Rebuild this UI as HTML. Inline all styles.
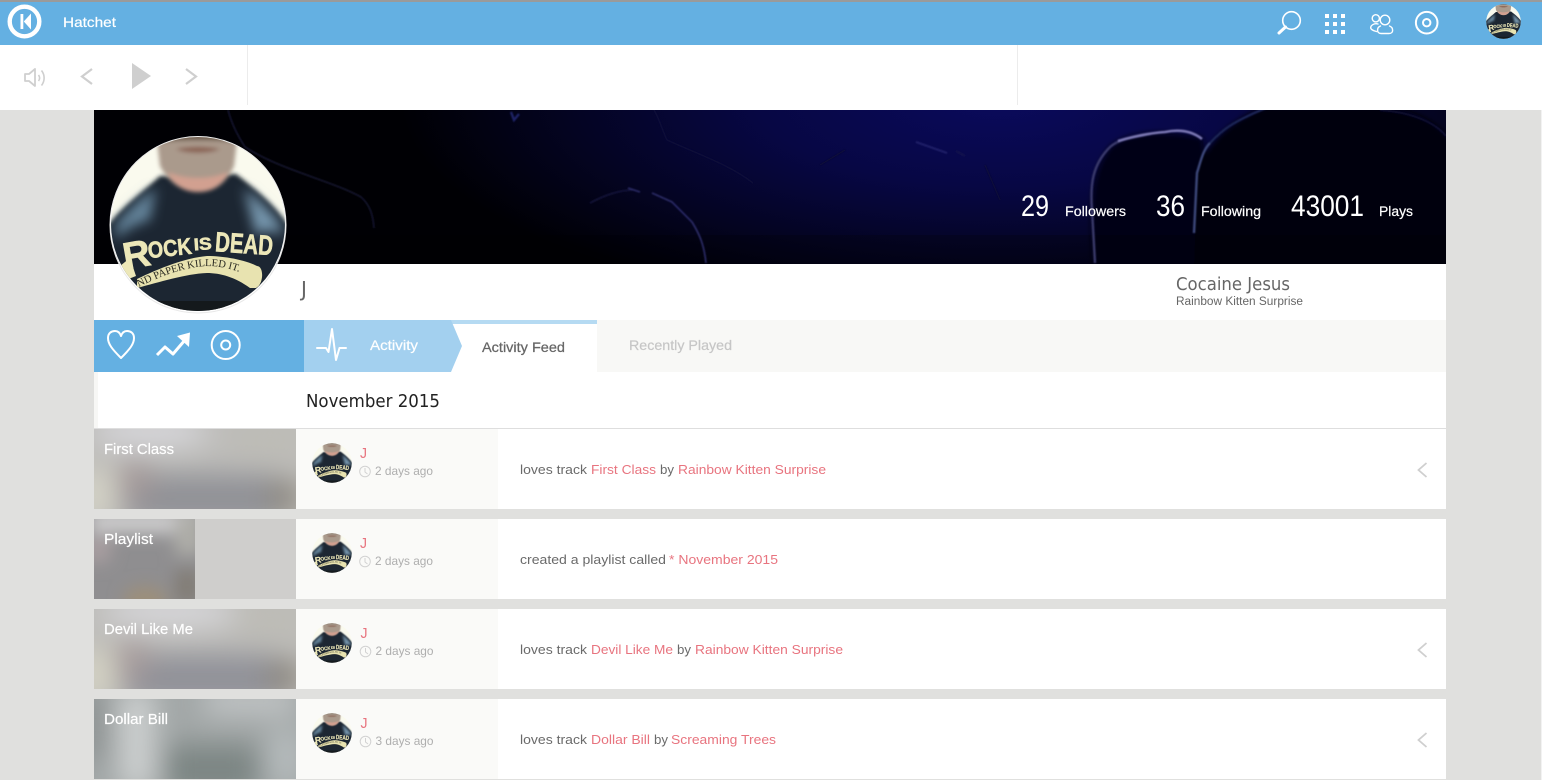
<!DOCTYPE html>
<html><head><meta charset="utf-8"><title>Hatchet</title>
<style>
html,body{margin:0;padding:0;width:1542px;height:780px;overflow:hidden;background:#e0e0de}
svg{display:block;position:absolute;left:0;top:0}
text{font-family:"Liberation Sans",sans-serif}
.w{fill:#fff}.g{fill:#6a6a6a;font-size:13px}.r{fill:#e8747f;font-size:13px}.t{fill:#fff;font-size:14.5px}
.j{fill:#e8747f;font-size:15px}.d{fill:#aeaeae;font-size:12px}
.o{font-family:"DejaVu Sans",sans-serif}
.cl{fill:none;stroke:#d2d2d2;stroke-width:1}
.ic{fill:none;stroke:#fff;stroke-width:2;stroke-linecap:round;stroke-linejoin:round}
.gr{fill:none;stroke:#cfcfcf;stroke-width:2.2}
</style></head>
<body>
<svg width="1542" height="780" viewBox="0 0 1542 780" xmlns="http://www.w3.org/2000/svg">
<defs>
<filter id="b2" x="-30%" y="-30%" width="160%" height="160%"><feGaussianBlur stdDeviation="2"/></filter>
<filter id="b3" x="-30%" y="-30%" width="160%" height="160%"><feGaussianBlur stdDeviation="3"/></filter>
<filter id="b6" x="-30%" y="-30%" width="160%" height="160%"><feGaussianBlur stdDeviation="6"/></filter>
<filter id="b1" x="-30%" y="-30%" width="160%" height="160%"><feGaussianBlur stdDeviation="0.7"/></filter>
<filter id="bs" x="-30%" y="-30%" width="160%" height="160%"><feGaussianBlur stdDeviation="0.35"/></filter>
<filter id="b9" x="-50%" y="-50%" width="200%" height="200%"><feGaussianBlur stdDeviation="8"/></filter>
<filter id="b14" x="-50%" y="-50%" width="200%" height="200%"><feGaussianBlur stdDeviation="14"/></filter>
<radialGradient id="navy" gradientUnits="userSpaceOnUse" cx="0" cy="0" r="600" gradientTransform="translate(1000 100) scale(1 .36)">
<stop offset="0" stop-color="#0a0a5c"/><stop offset=".4" stop-color="#070744"/><stop offset=".72" stop-color="#040422"/><stop offset="1" stop-color="#000004"/>
</radialGradient>
<clipPath id="ban"><rect x="94" y="110" width="1352" height="154"/></clipPath>
<clipPath id="c"><circle cx="88" cy="88" r="87"/></clipPath>
<clipPath id="th1"><rect x="94" y="429" width="202" height="80"/></clipPath>
<clipPath id="th2"><rect x="94" y="519" width="101" height="80"/></clipPath>
<clipPath id="th3"><rect x="94" y="609" width="202" height="80"/></clipPath>
<clipPath id="th4"><rect x="94" y="699" width="202" height="80"/></clipPath>
<path id="sc" d="M29 151 C50 140 75 131 97 130 C112 130 128 134 145 143"/>
<symbol id="av" viewBox="0 0 176 176">
<g clip-path="url(#c)">
<rect width="176" height="176" fill="#fafaee"/>
<g filter="url(#b2)">
<path d="M-4 92 C10 72 30 58 50 40 L126 38 C150 56 168 72 180 92 V180 H-4Z" fill="#1d2832"/>
</g>
<g filter="url(#b6)">
<path d="M6 88 C18 74 30 62 46 52 L40 84 C28 88 16 92 6 104Z" fill="#64839a"/>
<path d="M170 88 C158 72 146 62 134 52 L146 100 C152 94 160 92 172 100Z" fill="#7696ad"/>
</g>
<g filter="url(#b2)">
<path d="M46 -4 H128 L124 30 C116 48 104 56 88 56 C72 56 58 46 50 30Z" fill="#aa9a8c"/>
<path d="M46 -4 H128 L126 6 C110 4 66 4 50 6Z" fill="#6f5e50"/>
<path d="M66 13 C78 10 98 10 110 13 C100 18 76 18 66 13Z" fill="#8a6454"/>
<path d="M58 36 C74 44 102 44 118 36 C114 48 102 56 88 56 C74 56 62 48 58 36Z" fill="#d2a090"/>
</g>
<g filter="url(#bs)">
<g fill="#ece7b8" stroke="#ece7b8" stroke-width=".6" font-weight="bold" style="font-family:'Liberation Serif',serif">
<text x="14" y="131" font-size="38" transform="rotate(-10 30 125)">R</text>
<text x="38" y="120" font-size="23" textLength="44" lengthAdjust="spacingAndGlyphs" transform="rotate(-6 60 115)">OCK</text>
<text x="84" y="114" font-size="17" textLength="18" lengthAdjust="spacingAndGlyphs" transform="rotate(-4 90 112)">IS</text>
<text x="105" y="117" font-size="28" textLength="58" lengthAdjust="spacingAndGlyphs" transform="rotate(4 130 110)">DEAD</text>
</g>
<path d="M10 130 L20 122 L26 140 L16 144Z" fill="#ece7b8"/>
<path d="M27 143 C50 132 75 122 97 120 C115 120 135 124 147 130 C154 130 154 148 146 152 L140 152 C125 141 110 137 97 137 C75 138 50 146 27 152Z" fill="#e8e3b0"/>
<text font-size="10.500" fill="#2a2a20" style="font-family:'Liberation Serif',serif"><textPath href="#sc">ND PAPER KILLED IT.</textPath></text>
</g>
<rect x="0" y="165" width="176" height="12" fill="#14191c"/>
</g>
</symbol>
</defs>

<!-- chrome -->
<rect width="1542" height="780" fill="#e0e0de"/>
<rect x="1541" y="110" width="1" height="670" fill="#f2f2f2"/>
<rect y="0" width="1542" height="2" fill="#9a9a9a"/>
<rect y="2" width="1542" height="43" fill="#64b0e2"/>
<rect y="45" width="1542" height="65" fill="#fff"/>
<rect x="247" y="45" width="1" height="60" fill="#ececec"/>
<rect x="1017" y="45" width="1" height="60" fill="#ececec"/>

<!-- logo -->
<circle cx="24.5" cy="21.5" r="14.8" fill="none" stroke="#fff" stroke-width="4.4"/>
<rect x="20.5" y="14" width="2.8" height="15" fill="#fff"/>
<path d="M31 13.5 V29.5 L23.8 21.5Z" fill="#fff"/>
<text x="63" y="27" font-size="14" class="w" stroke="#fff" stroke-width=".2" textLength="53" lengthAdjust="spacingAndGlyphs">Hatchet</text>

<!-- header icons -->
<circle cx="1291.5" cy="20.5" r="8.8" class="ic" style="stroke-width:1.6"/>
<path d="M1279 33 L1285.5 27" class="ic" style="stroke-width:3"/>
<g fill="#fff">
<rect x="1325" y="14" width="4" height="4"/><rect x="1333" y="14" width="4" height="4"/><rect x="1341" y="14" width="4" height="4"/>
<rect x="1325" y="22" width="4" height="4"/><rect x="1333" y="22" width="4" height="4"/><rect x="1341" y="22" width="4" height="4"/>
<rect x="1325" y="30" width="4" height="4"/><rect x="1333" y="30" width="4" height="4"/><rect x="1341" y="30" width="4" height="4"/>
</g>
<g class="ic" style="stroke-width:1.4">
<circle cx="1375.8" cy="18.3" r="3.6"/><circle cx="1385" cy="20" r="4.8"/>
<path d="M1378 24 C1374.5 23 1371 25 1370.7 27.5 C1370.5 29.5 1373 30.5 1376.5 31.5"/>
<path d="M1380.5 26 C1376.5 27.5 1376.5 33.5 1381 33.5 H1389 C1394 33.5 1393.5 27.5 1389.5 26"/>
</g>
<circle cx="1426.7" cy="22.7" r="10.8" class="ic"/><circle cx="1426.7" cy="22.7" r="3.7" class="ic"/>
<use href="#av" x="1486" y="4" width="35" height="35"/>

<!-- player -->
<path d="M25 74 H29 L35 69 V86 L29 81 H25Z" class="gr" style="stroke-width:1.8;stroke-linejoin:round"/>
<path d="M38.5 75 C40 77 40 79 38.5 81 M41.5 70.5 C45 75 45 81 41.5 85.5" class="gr" style="stroke-width:1.6"/>
<path d="M92 69 L82 76.5 L92 84" class="gr"/>
<path d="M132 63 L151 76 L132 89Z" fill="#cfcfcf"/>
<path d="M186 69 L196 76.5 L186 84" class="gr"/>

<!-- banner -->
<g clip-path="url(#ban)">
<rect x="94" y="110" width="1352" height="154" fill="url(#navy)"/>
<g filter="url(#b3)">
<path d="M1094 270 C1088 200 1092 170 1110 147 C1125 133 1160 128 1203 138 L1220 270Z" fill="#030318"/>
<path d="M1194 270 L1197 173 C1204 143 1235 118 1266 106 H1380 C1410 108 1436 120 1450 140 V270Z" fill="#01020c"/>
</g>
<rect x="94" y="235" width="1352" height="30" fill="#000" opacity=".2"/>
<g fill="none" filter="url(#b1)">
<path d="M1095 263 L1092 210 C1090 185 1092 165 1110 147 C1120 138 1135 137 1150 134" stroke="#3a3a6c" stroke-width="2.4"/>
<path d="M1118 141 C1135 136 1150 133 1165 132 C1180 129 1192 131 1202 139" stroke="#7c78b4" stroke-width="2.6"/>
<path d="M1194 233 L1197 173 C1201 160 1203 150 1210 143" stroke="#3e4a7c" stroke-width="2.4"/>
<path d="M1210 143 C1222 130 1232 122 1266 108" stroke="#1e2858" stroke-width="2.2"/>
<path d="M1380 110 C1410 112 1435 122 1446 136" stroke="#0c0c30" stroke-width="2"/>
<path d="M228 110 C232 125 238 136 245 147 C280 170 330 180 361 197 C370 205 373 215 374 228" stroke="#161830" stroke-width="1.5"/>
<path d="M654 110 C660 120 662 130 667 140 C700 155 730 165 753 183" stroke="#10103a" stroke-width="1.4"/>
<path d="M590 203 C605 195 620 190 633 190" stroke="#14143c" stroke-width="1.5"/>
<path d="M628 188 L640 192 M652 193 L672 202 L692 222 C700 235 704 245 706 263" stroke="#2c2c66" stroke-width="1.7"/>
<path d="M511 112 L514 120 L519 114" stroke="#1e2266" stroke-width="2.4"/>
<path d="M916 142 L947 153" stroke="#20206a" stroke-width="1.8"/>
<path d="M956 151 L965 156" stroke="#14144c" stroke-width="1.5"/>
<path d="M820 165 L845 150 M985 165 L1000 200" stroke="#0c0c30" stroke-width="1.2"/>
</g>
</g>
<text x="1021" y="216" font-size="30" class="w" textLength="28" lengthAdjust="spacingAndGlyphs">29</text>
<text x="1156" y="216" font-size="30" class="w" textLength="29" lengthAdjust="spacingAndGlyphs">36</text>
<text x="1291" y="216" font-size="30" class="w" textLength="73" lengthAdjust="spacingAndGlyphs">43001</text>
<text x="1065" y="216" font-size="13.5" class="w" stroke="#fff" stroke-width=".2" textLength="61" lengthAdjust="spacingAndGlyphs">Followers</text>
<text x="1201" y="216" font-size="13.5" class="w" stroke="#fff" stroke-width=".2" textLength="60" lengthAdjust="spacingAndGlyphs">Following</text>
<text x="1379" y="216" font-size="13.5" class="w" stroke="#fff" stroke-width=".2" textLength="34" lengthAdjust="spacingAndGlyphs">Plays</text>

<!-- info strip -->
<rect x="94" y="264" width="1352" height="56" fill="#fff"/>
<text x="301" y="296" font-size="20" fill="#666" class="o">J</text>
<text x="1176" y="290" font-size="17.5" fill="#666" class="o" textLength="114" lengthAdjust="spacingAndGlyphs">Cocaine Jesus</text>
<text x="1176" y="305" font-size="11.5" fill="#666" textLength="127" lengthAdjust="spacingAndGlyphs">Rainbow Kitten Surprise</text>

<!-- avatar -->
<circle cx="198" cy="224" r="88" fill="#fff"/>
<circle cx="198" cy="225" r="88" fill="none" stroke="#e8e8e8" stroke-width="1"/>
<use href="#av" x="110" y="136" width="176" height="176"/>

<!-- tabs -->
<rect x="94" y="320" width="1352" height="52" fill="#f8f8f6"/>
<rect x="94" y="320" width="210" height="52" fill="#64b0e2"/>
<rect x="451" y="320" width="146" height="52" fill="#fff"/>
<rect x="451" y="320" width="146" height="4" fill="#b5daf2"/>
<path d="M304 320 H451 L462 346 L451 372 H304Z" fill="#a3d0ef"/>
<path class="ic" d="M121 358 C112 349 108 344 108 338 C108 333 111.5 331 115 331 C118 331 120 333 121 336 C122 333 124 331 127 331 C130.5 331 134 333 134 338 C134 344 130 349 121 358Z"/>
<path class="ic" d="M157 355 L165 347 L173 354 L185 340" style="stroke-width:3;stroke-linecap:butt"/>
<path d="M190 332.5 L177 336 L189 347Z" fill="#fff"/>
<circle cx="225.7" cy="345" r="14" class="ic"/><circle cx="225.7" cy="345" r="4.5" class="ic"/>
<path class="ic" d="M317 348 H326 L328.5 352 L332 329 L336 360 L339.5 348 H346"/>
<text x="370" y="350" font-size="14" class="w" stroke="#fff" stroke-width=".2" textLength="48" lengthAdjust="spacingAndGlyphs">Activity</text>
<text x="482" y="352" font-size="14" fill="#666" stroke="#666" stroke-width=".25" textLength="83" lengthAdjust="spacingAndGlyphs">Activity Feed</text>
<text x="629" y="350" font-size="14" fill="#c6c6c6" stroke="#c6c6c6" stroke-width=".2" textLength="103" lengthAdjust="spacingAndGlyphs">Recently Played</text>

<!-- heading -->
<rect x="94" y="372" width="1352" height="56" fill="#fff"/>
<rect x="94" y="372" width="4" height="56" fill="#f7f7f5"/>
<rect x="94" y="428" width="1352" height="1" fill="#dedede"/>
<text x="306" y="407" font-size="17.5" fill="#222" class="o" textLength="134" lengthAdjust="spacingAndGlyphs">November 2015</text>

<!-- rows backgrounds -->
<g fill="#fff"><rect x="94" y="429" width="1352" height="80"/><rect x="94" y="519" width="1352" height="80"/><rect x="94" y="609" width="1352" height="80"/><rect x="94" y="699" width="1352" height="80"/></g>
<g fill="#fafaf8"><rect x="296" y="429" width="202" height="80"/><rect x="296" y="519" width="202" height="80"/><rect x="296" y="609" width="202" height="80"/><rect x="296" y="699" width="202" height="80"/></g>

<!-- thumb 1 -->
<g clip-path="url(#th1)">
<rect x="94" y="429" width="202" height="80" fill="#bdbcb9"/>
<g filter="url(#b14)">
<ellipse cx="150" cy="432" rx="60" ry="14" fill="#dadadf"/>
<ellipse cx="270" cy="440" rx="40" ry="18" fill="#bdbcb6"/>
<rect x="125" y="474" width="150" height="50" fill="#909196"/>
<ellipse cx="135" cy="480" rx="16" ry="22" fill="#a39797"/>
<rect x="84" y="470" width="24" height="50" fill="#dcdacb"/>
<rect x="270" y="480" width="30" height="35" fill="#8c877e"/>
</g>
</g>
<!-- thumb 2 -->
<rect x="195" y="519" width="101" height="80" fill="#cfcecc"/>
<g clip-path="url(#th2)">
<rect x="94" y="519" width="101" height="80" fill="#8f8e90"/>
<g filter="url(#b9)">
<rect x="90" y="510" width="110" height="24" fill="#cbcacb"/>
<rect x="175" y="515" width="28" height="40" fill="#aeada8"/>
<ellipse cx="98" cy="550" rx="14" ry="14" fill="#a89ea0"/>
<ellipse cx="145" cy="600" rx="22" ry="14" fill="#9c8f7a"/>
<rect x="175" y="570" width="24" height="34" fill="#827d76"/>
</g>
</g>
<!-- thumb 3 -->
<g clip-path="url(#th3)">
<rect x="94" y="609" width="202" height="80" fill="#bdbcb9"/>
<g filter="url(#b14)">
<ellipse cx="170" cy="612" rx="70" ry="14" fill="#dadade"/>
<ellipse cx="270" cy="620" rx="40" ry="18" fill="#bdbcb6"/>
<rect x="125" y="654" width="150" height="50" fill="#909198"/>
<ellipse cx="132" cy="660" rx="16" ry="22" fill="#a69a9a"/>
<rect x="84" y="650" width="24" height="50" fill="#dcdac8"/>
<rect x="270" y="660" width="30" height="35" fill="#8a857c"/>
</g>
</g>
<!-- thumb 4 -->
<g clip-path="url(#th4)">
<rect x="94" y="699" width="202" height="80" fill="#a2a7a7"/>
<g filter="url(#b14)">
<rect x="120" y="690" width="34" height="100" fill="#cfd2d2"/>
<rect x="80" y="690" width="26" height="70" fill="#8a8f8f"/>
<rect x="205" y="690" width="90" height="22" fill="#c8cbcc"/>
<rect x="165" y="745" width="95" height="50" fill="#7b8583"/>
<rect x="270" y="730" width="30" height="55" fill="#b8bebf"/>
</g>
</g>
<rect x="94" y="779" width="1352" height="1" fill="#e0e0de"/>

<text x="104" y="454" class="t" stroke="#fff" stroke-width=".2" textLength="70" lengthAdjust="spacingAndGlyphs">First Class</text>
<text x="104" y="544" class="t" stroke="#fff" stroke-width=".2" textLength="49" lengthAdjust="spacingAndGlyphs">Playlist</text>
<text x="104" y="634" class="t" stroke="#fff" stroke-width=".2" textLength="89" lengthAdjust="spacingAndGlyphs">Devil Like Me</text>
<text x="104" y="724" class="t" stroke="#fff" stroke-width=".2" textLength="64" lengthAdjust="spacingAndGlyphs">Dollar Bill</text>

<!-- row meta -->
<use href="#av" x="312" y="443" width="40" height="40"/>
<use href="#av" x="312" y="533" width="40" height="40"/>
<use href="#av" x="312" y="623" width="40" height="40"/>
<use href="#av" x="312" y="713" width="40" height="40"/>
<text x="360" y="458" class="j" textLength="7" lengthAdjust="spacingAndGlyphs">J</text>
<text x="360" y="548" class="j" textLength="7" lengthAdjust="spacingAndGlyphs">J</text>
<text x="360.5" y="638" class="j" textLength="7" lengthAdjust="spacingAndGlyphs">J</text>
<text x="360.5" y="728" class="j" textLength="7" lengthAdjust="spacingAndGlyphs">J</text>
<g class="cl">
<circle cx="365" cy="471.5" r="5.3"/><path d="M365 468 V472 L367.5 474"/>
<circle cx="365" cy="561.5" r="5.3"/><path d="M365 558 V562 L367.5 564"/>
<circle cx="365.5" cy="651.5" r="5.3"/><path d="M365.5 648 V652 L368 654"/>
<circle cx="365.5" cy="741.5" r="5.3"/><path d="M365.5 738 V742 L368 744"/>
</g>
<text x="375" y="475" class="d" textLength="58" lengthAdjust="spacingAndGlyphs">2 days ago</text>
<text x="375" y="565" class="d" textLength="58" lengthAdjust="spacingAndGlyphs">2 days ago</text>
<text x="375.5" y="655" class="d" textLength="58" lengthAdjust="spacingAndGlyphs">2 days ago</text>
<text x="375.5" y="745" class="d" textLength="58" lengthAdjust="spacingAndGlyphs">3 days ago</text>

<!-- row text -->
<text x="520" y="474" class="g" textLength="67" lengthAdjust="spacingAndGlyphs">loves track</text>
<text x="591" y="474" class="r" textLength="65" lengthAdjust="spacingAndGlyphs">First Class</text>
<text x="660" y="474" class="g" textLength="14" lengthAdjust="spacingAndGlyphs">by</text>
<text x="678" y="474" class="r" textLength="148" lengthAdjust="spacingAndGlyphs">Rainbow Kitten Surprise</text>

<text x="520" y="564" class="g" textLength="146" lengthAdjust="spacingAndGlyphs">created a playlist called</text>
<text x="669" y="564" class="r" textLength="109" lengthAdjust="spacingAndGlyphs">* November 2015</text>

<text x="520" y="654" class="g" textLength="67" lengthAdjust="spacingAndGlyphs">loves track</text>
<text x="591" y="654" class="r" textLength="82" lengthAdjust="spacingAndGlyphs">Devil Like Me</text>
<text x="677" y="654" class="g" textLength="14" lengthAdjust="spacingAndGlyphs">by</text>
<text x="695" y="654" class="r" textLength="148" lengthAdjust="spacingAndGlyphs">Rainbow Kitten Surprise</text>

<text x="520" y="744" class="g" textLength="67" lengthAdjust="spacingAndGlyphs">loves track</text>
<text x="591" y="744" class="r" textLength="59" lengthAdjust="spacingAndGlyphs">Dollar Bill</text>
<text x="654" y="744" class="g" textLength="14" lengthAdjust="spacingAndGlyphs">by</text>
<text x="671" y="744" class="r" textLength="105" lengthAdjust="spacingAndGlyphs">Screaming Trees</text>

<g class="gr" style="stroke-width:1.8">
<path d="M1426.5 463 L1418.5 470 L1426.5 477"/>
<path d="M1426.5 643 L1418.5 650 L1426.5 657"/>
<path d="M1426.5 733 L1418.5 740 L1426.5 747"/>
</g>
</svg>
</body></html>
